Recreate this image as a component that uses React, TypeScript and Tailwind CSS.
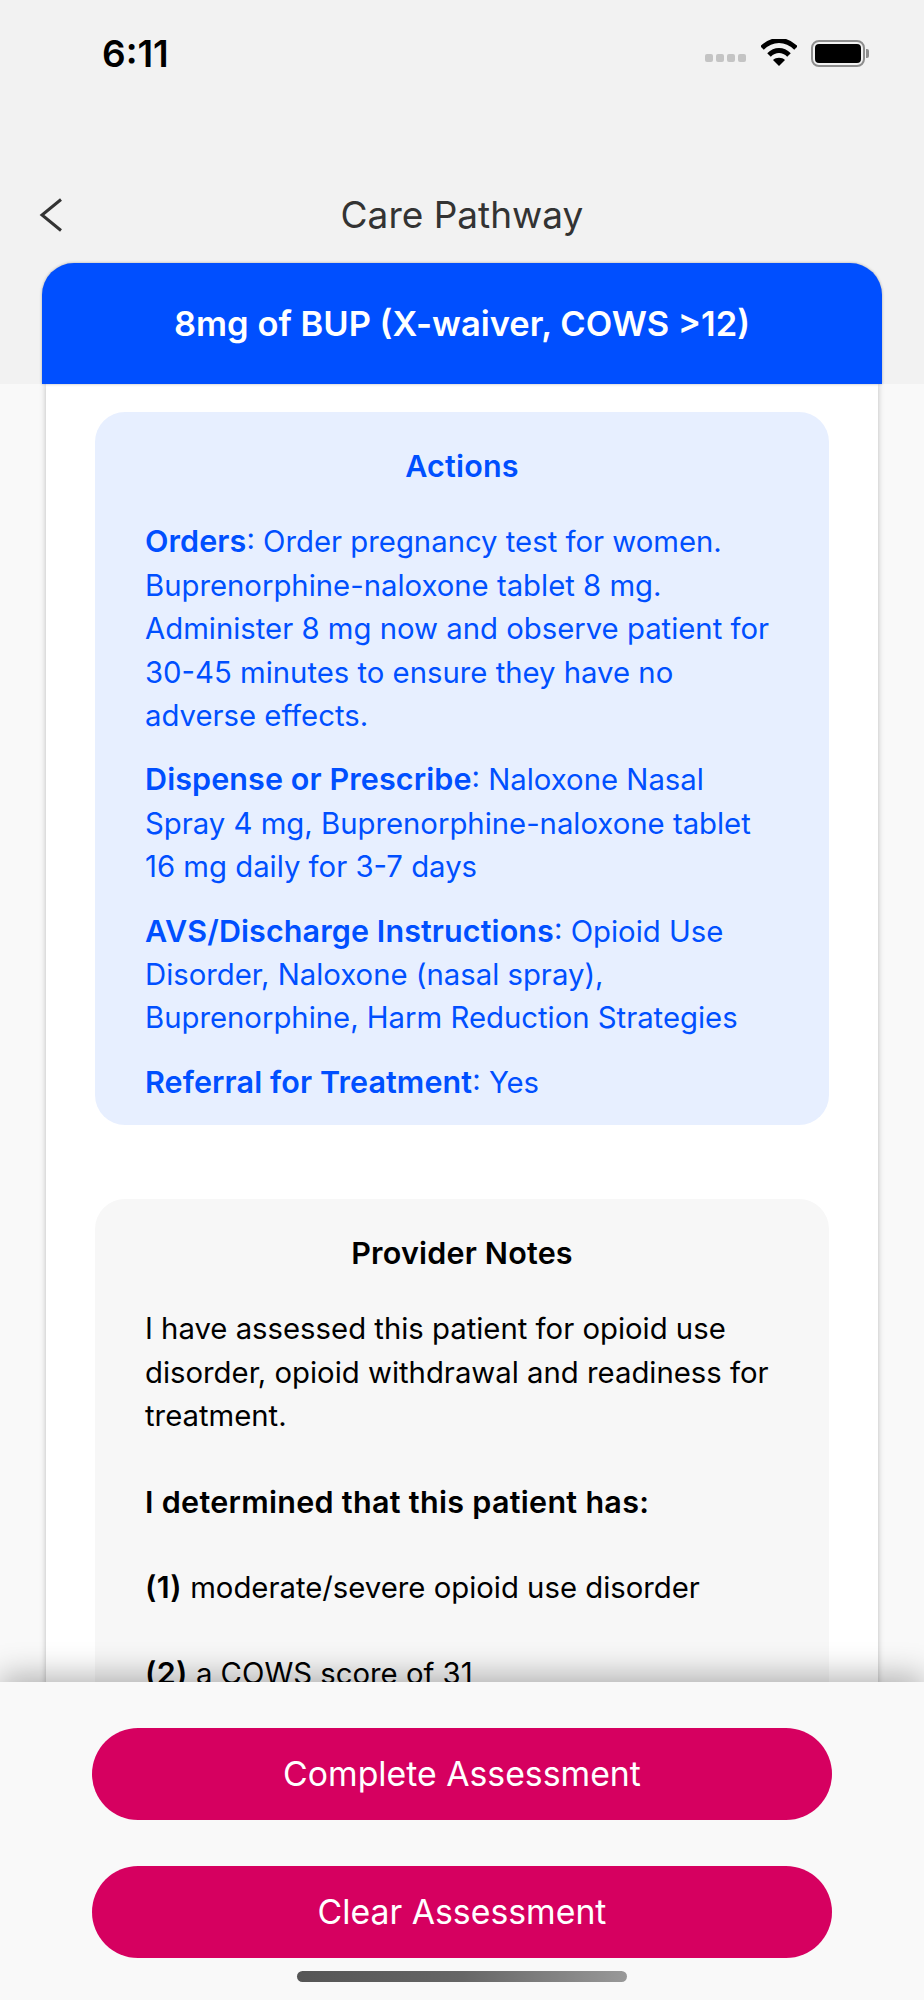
import React from 'react';

function StatusBar() {
  return (
    <div className="flex h-[104px] items-center justify-between pl-[102px] pr-[55px] pt-[2px]">
      <span className="text-[37px] font-semibold leading-none text-black">6:11</span>
      <div className="flex items-center">
        <div className="mt-[10px] mr-[15px] flex gap-[3px]">
          <span className="size-[8px] rounded-[2px] bg-[#c4c4c4]" />
          <span className="size-[8px] rounded-[2px] bg-[#c4c4c4]" />
          <span className="size-[8px] rounded-[2px] bg-[#c4c4c4]" />
          <span className="size-[8px] rounded-[2px] bg-[#c4c4c4]" />
        </div>
        <svg width="36" height="28" viewBox="0 0 36 28" className="mr-[14px]">
          <path d="M1 9 C11 -1 25 -1 35 9" fill="none" stroke="#000" strokeWidth="5" />
          <path d="M8 16 C14 10 22 10 28 16" fill="none" stroke="#000" strokeWidth="5" />
          <path d="M12 21 C15 18 21 18 24 21 L18 27 Z" fill="#000" />
        </svg>
        <div className="flex items-center">
          <div className="flex h-[27px] w-[54px] rounded-[8px] border-[2px] border-[#8e8e8e] p-[2px]">
            <div className="flex-1 rounded-[4px] bg-black" />
          </div>
          <div className="ml-[1px] h-[9px] w-[3px] rounded-r-[2px] bg-[#8e8e8e]" />
        </div>
      </div>
    </div>
  );
}

function Para({ label, children }: { label: string; children: React.ReactNode }) {
  return (
    <p className="mb-[21px] last:mb-0">
      <strong className="text-[30.5px] leading-none font-semibold tracking-[0.1px]">{label}</strong>: {children}
    </p>
  );
}

export default function App() {
  return (
    <div className="relative flex h-[2000px] w-[924px] flex-col overflow-hidden bg-[#f9f9f9] font-['Inter',sans-serif]">
      <div className="h-[384px] shrink-0 bg-[#f2f2f2]">
        <StatusBar />
        <div className="relative mt-[89px] flex h-[44px] items-center justify-center">
          <svg width="24" height="34" viewBox="0 0 24 34" className="absolute left-[39px]">
            <path d="M22 1.5 L3 17 L22 32.5" fill="none" stroke="#333" strokeWidth="3" />
          </svg>
          <span className="text-[37px] font-normal text-[#333]">Care Pathway</span>
        </div>
      </div>

      <div className="relative min-h-0 flex-1">
        <div className="absolute left-[42px] right-[42px] top-[-121px] z-10 flex h-[121px] items-center justify-center rounded-t-[32px] bg-[#004fff] shadow-[0_0_3px_rgba(0,0,0,0.3)]">
          <span className="text-[34.5px] font-semibold text-white">8mg of BUP (X-waiver, COWS &gt;12)</span>
        </div>
        <div className="mx-[46px] h-full bg-white px-[49px] pt-[28px] shadow-[0_0_6px_rgba(0,0,0,0.25)]">
          <div className="h-[713px] rounded-[30px] bg-[#e7efff] px-[50px] pt-[32px] text-[29.3px] leading-[43.4px] text-[#004fff]">
            <h2 className="mb-[33px] text-center text-[30.5px] font-semibold tracking-[0.2px]">Actions</h2>
            <Para label="Orders">
              Order pregnancy test for women. Buprenorphine-naloxone tablet 8 mg. Administer 8 mg now and observe patient for 30-45 minutes to ensure they have no adverse effects.
            </Para>
            <Para label="Dispense or Prescribe">
              Naloxone Nasal Spray 4 mg, Buprenorphine-naloxone tablet 16 mg daily for 3-7 days
            </Para>
            <Para label="AVS/Discharge Instructions">
              Opioid Use Disorder, Naloxone (nasal spray), Buprenorphine, Harm Reduction Strategies
            </Para>
            <Para label="Referral for Treatment">Yes</Para>
          </div>

          <div className="mt-[74px] h-[600px] rounded-[30px] bg-[#f7f7f7] px-[50px] pt-[32px] text-[29.3px] leading-[43.4px] text-black">
            <h2 className="mb-[33px] text-center text-[30.5px] font-semibold tracking-[0.2px]">Provider Notes</h2>
            <p>I have assessed this patient for opioid use disorder, opioid withdrawal and readiness for treatment.</p>
            <p className="mt-[42px] text-[30.5px] font-semibold tracking-[0.3px]">I determined that this patient has:</p>
            <p className="mt-[43px]"><strong className="text-[30.5px] leading-none font-semibold tracking-[0.3px]">(1)</strong> moderate/severe opioid use disorder</p>
            <p className="mt-[43px]"><strong className="text-[30.5px] leading-none font-semibold tracking-[0.3px]">(2)</strong> a COWS score of 31</p>
          </div>
        </div>
      </div>

      <div className="absolute inset-x-0 bottom-0 z-20 flex h-[318px] flex-col items-center bg-[#f9f9f9] pt-[46px] shadow-[0_-6px_30px_rgba(0,0,0,0.3)]">
        <button className="h-[92px] w-[740px] rounded-full bg-[#d60060] text-[33.8px] text-white">Complete Assessment</button>
        <button className="mt-[46px] h-[92px] w-[740px] rounded-full bg-[#d60060] text-[33.8px] text-white">Clear Assessment</button>
        <div className="mt-[13px] h-[11px] w-[330px] rounded-full bg-gradient-to-r from-[#555] via-[#666] to-[#999]" />
      </div>
    </div>
  );
}
